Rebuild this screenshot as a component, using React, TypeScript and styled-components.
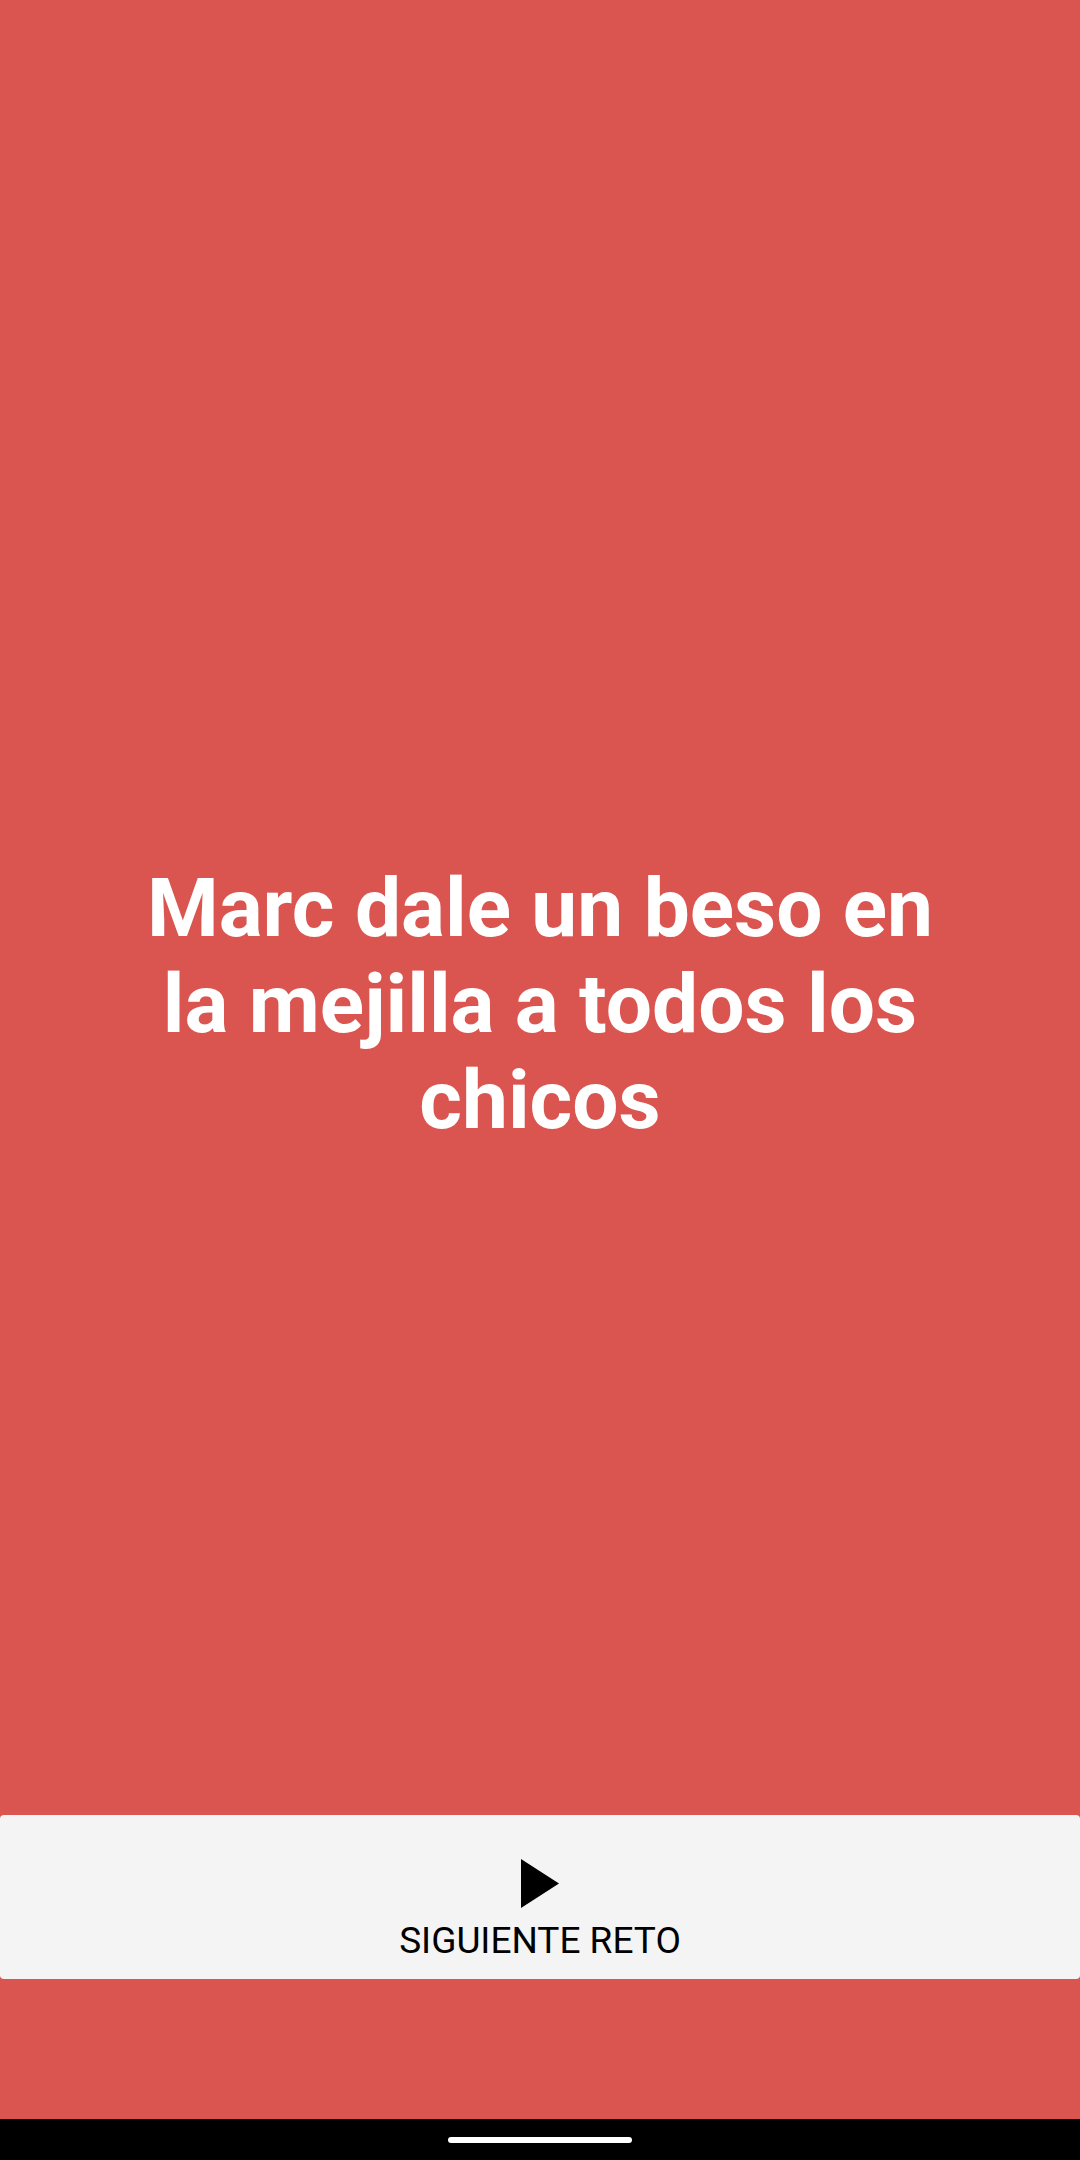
import React from "react";
import styled, { createGlobalStyle } from "styled-components";

const Global = createGlobalStyle`
  html, body { margin: 0; padding: 0; }
  body { font-family: Roboto, "Noto Sans", sans-serif; background: #DA5550; }
  #root { height: 2160px; }
`;

const Screen = styled.div`
  display: flex;
  flex-direction: column;
  width: 1080px;
  height: 2160px;
  background: #DA5550;
`;

const Stage = styled.main`
  flex: 1;
  display: flex;
  align-items: center;
  justify-content: center;
  padding: 192px 130px 0;
`;

const Challenge = styled.h1`
  margin: 0;
  color: #ffffff;
  font-family: Roboto, sans-serif;
  font-weight: 700;
  font-size: 82px;
  line-height: 96px;
  text-align: center;
`;

const NextButton = styled.button`
  display: flex;
  flex-direction: column;
  align-items: center;
  justify-content: flex-start;
  height: 164px;
  width: 100%;
  margin: 0;
  padding: 44px 0 0;
  border: none;
  border-radius: 4px;
  background: #F4F4F4;
  color: #000;
  font-family: Roboto, sans-serif;
  font-size: 37px;
  font-weight: 400;
  cursor: pointer;
`;

const Label = styled.span`
  display: block;
  margin-top: 12px;
  line-height: 42px;
`;

const BottomSpace = styled.div`
  height: 140px;
`;

const NavBar = styled.div`
  height: 41px;
  background: #000;
  display: flex;
  align-items: center;
  justify-content: center;
`;

const HomeIndicator = styled.div`
  width: 184px;
  height: 6px;
  border-radius: 3px;
  background: #fff;
`;

export default function App() {
  return (
    <>
      <Global />
      <Screen>
        <Stage>
          <Challenge>Marc dale un beso en la mejilla a todos los chicos</Challenge>
        </Stage>
        <NextButton>
          <svg width="38" height="49" viewBox="0 0 38 49">
            <polygon points="0,0 38,24.5 0,49" fill="#000" />
          </svg>
          <Label>SIGUIENTE RETO</Label>
        </NextButton>
        <BottomSpace />
        <NavBar>
          <HomeIndicator />
        </NavBar>
      </Screen>
    </>
  );
}
